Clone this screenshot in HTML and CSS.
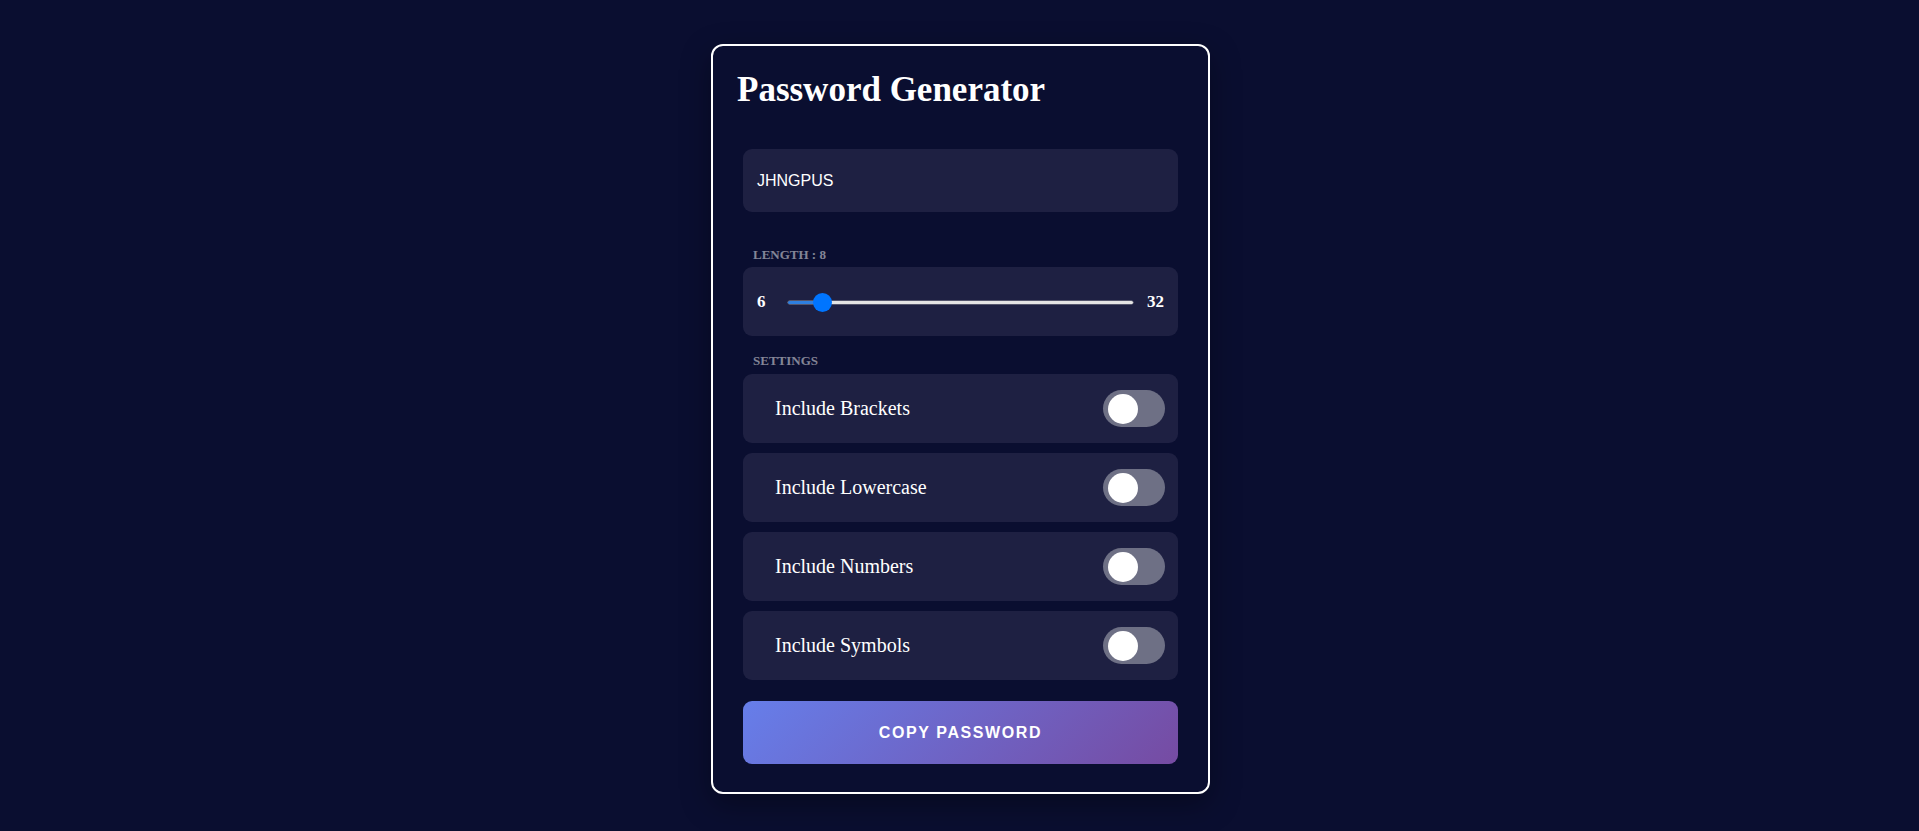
FILE: index.html
```html
<!DOCTYPE html>
<html lang="en">
<head>
<meta charset="utf-8">
<title>Password Generator</title>
<link rel="stylesheet" href="styles.css">
</head>
<body>
  <div class="card">
    <h1 class="title">Password Generator</h1>
    <div class="content">
      <div class="result">JHNGPUS</div>

      <div class="label label-length">Length : 8</div>
      <div class="slider-box">
        <span class="num num-min">6</span>
        <input class="range" type="range" min="6" max="32" value="8" style="--p: 0.0769">
        <span class="num num-max">32</span>
      </div>

      <div class="label label-settings">Settings</div>
      <div class="settings">
        <div class="setting">
          <span class="setting-name">Include Brackets</span>
          <span class="toggle"><span class="knob"></span></span>
        </div>
        <div class="setting">
          <span class="setting-name">Include Lowercase</span>
          <span class="toggle"><span class="knob"></span></span>
        </div>
        <div class="setting">
          <span class="setting-name">Include Numbers</span>
          <span class="toggle"><span class="knob"></span></span>
        </div>
        <div class="setting">
          <span class="setting-name">Include Symbols</span>
          <span class="toggle"><span class="knob"></span></span>
        </div>
      </div>

      <button class="copy-btn">Copy Password</button>
    </div>
  </div>
</body>
</html>
```

FILE: styles.css
```css
* {
  box-sizing: border-box;
}

html, body {
  margin: 0;
  height: 100%;
}

body {
  background: #0a0e30;
  font-family: "Liberation Serif", "Times New Roman", serif;
  color: #ffffff;
  display: flex;
  justify-content: center;
  align-items: flex-start;
  padding-top: 44px;
  padding-left: 2px;
}

.card {
  width: 499px;
  border: 2px solid #ffffff;
  border-radius: 12px;
  background: #0a0e30;
  padding: 24px 24px 28px 24px;
  box-shadow: 0 10px 30px rgba(0, 0, 0, 0.35);
}

.title {
  margin: 0 0 40px 0;
  font-size: 35px;
  line-height: 39px;
  font-weight: 700;
  color: #ffffff;
}

.content {
  margin: 0 6px;
}

.result {
  height: 63px;
  background: #1e2042;
  border-radius: 9px;
  display: flex;
  align-items: center;
  padding-left: 14px;
  font-family: "Liberation Sans", Arial, sans-serif;
  font-size: 16px;
  color: #ffffff;
}

.label {
  font-size: 13px;
  line-height: 15px;
  font-weight: 700;
  text-transform: uppercase;
  color: rgba(255, 255, 255, 0.5);
  padding-left: 10px;
}

.label-length {
  margin: 35px 0 5px 0;
}

.label-settings {
  margin: 17px 0 6px 0;
}

.slider-box {
  height: 69px;
  background: #1e2042;
  border-radius: 9px;
  display: flex;
  align-items: center;
  padding: 0 14px;
}

.num {
  font-size: 17px;
  font-weight: 700;
  color: #ffffff;
}

.range {
  -webkit-appearance: none;
  appearance: none;
  flex: 1;
  height: 3px;
  margin: 1px 14px 0 22px;
  border-radius: 2px;
  background: linear-gradient(to right,
    #2f7fdf calc(9.5px + (100% - 19px) * var(--p)),
    #e4e4e4 0);
  box-shadow: 0 0 0 0.5px rgba(150, 150, 160, 0.9);
  outline: none;
}

.range::-webkit-slider-thumb {
  -webkit-appearance: none;
  appearance: none;
  width: 19px;
  height: 19px;
  border-radius: 50%;
  background: #0075ff;
  border: none;
}

.settings {
  display: flex;
  flex-direction: column;
  gap: 10px;
}

.setting {
  height: 69px;
  background: #1e2042;
  border-radius: 9px;
  display: flex;
  align-items: center;
  justify-content: space-between;
  padding: 0 13px 0 32px;
}

.setting-name {
  font-size: 20px;
  color: #ffffff;
}

.toggle {
  width: 62px;
  height: 37px;
  border-radius: 19px;
  background: #6e7085;
  display: flex;
  align-items: center;
  padding-left: 5px;
}

.knob {
  width: 30px;
  height: 30px;
  border-radius: 50%;
  background: #ffffff;
}

.copy-btn {
  display: block;
  width: 100%;
  height: 63px;
  margin-top: 21px;
  border: none;
  border-radius: 9px;
  background: linear-gradient(135deg, #667eea 0%, #764ba2 100%);
  color: #ffffff;
  font-family: "Liberation Sans", Arial, sans-serif;
  font-size: 16px;
  font-weight: 700;
  letter-spacing: 0.1em;
  text-transform: uppercase;
}
```
